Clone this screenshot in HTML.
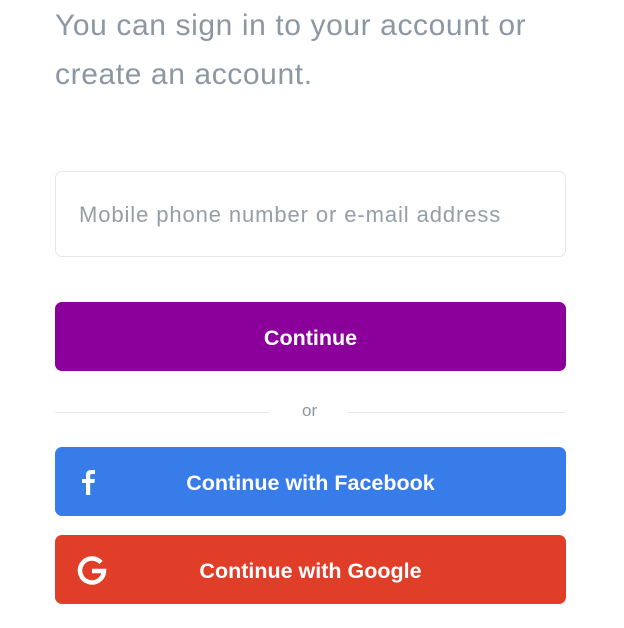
<!DOCTYPE html>
<html><head><meta charset="utf-8"><style>
body{margin:0;width:624px;height:628px;background:#fff;font-family:"Liberation Sans",sans-serif;position:relative;overflow:hidden}
.h{position:absolute;left:55px;top:1px;font-size:30px;line-height:49px;letter-spacing:0.6px;color:#8b97a3;white-space:nowrap}
.in{position:absolute;left:55px;top:171px;width:509px;height:84px;border:1px solid #e3e6ea;border-radius:7px}
.in span{position:absolute;left:23px;top:30px;font-size:22px;letter-spacing:0.9px;color:#959ea7;white-space:nowrap}
.btn{position:absolute;left:55px;width:511px;height:69px;border-radius:7px;color:#fff;font-weight:bold;font-size:21.5px;text-align:center;line-height:72px}
.line{position:absolute;top:412px;height:1px;background:#e6e8eb}
.or{position:absolute;top:401px;left:302px;font-size:17px;color:#8b97a3}
</style></head><body>
<div class="h">You can sign in to your account or<br>create an account.</div>
<div class="in"><span>Mobile phone number or e-mail address</span></div>
<div class="btn" style="top:302px;background:#8b009b">Continue</div>
<div class="line" style="left:55px;width:215px"></div>
<div class="line" style="left:348px;width:218px"></div>
<div class="or">or</div>
<div class="btn" style="top:447px;background:#377ce8">Continue with Facebook
<svg style="position:absolute;left:26px;top:22px" width="16" height="26" viewBox="0 0 16 26"><path d="M5 26V14H1V10H5V6.5C5 2.5 7 1 10.5 1H14V5H11C9.5 5 9.2 5.7 9.2 7V10H14L13.3 14H9.2V26Z" fill="#fff"/></svg></div>
<div class="btn" style="top:535px;background:#e03e28">Continue with Google
<svg style="position:absolute;left:22px;top:20px" width="30" height="30" viewBox="0 0 30 30"><path d="M24 7.5A12 12 0 1 0 27 16H15" fill="none" stroke="#fff" stroke-width="4.5"/></svg></div>
</body></html>
